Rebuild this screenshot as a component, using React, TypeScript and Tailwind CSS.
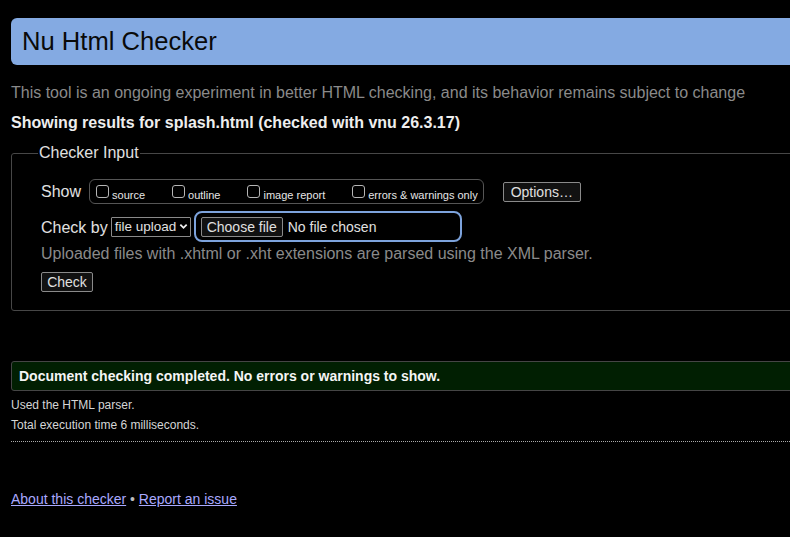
import React from "react";

function Box() {
  return <span className="inline-block w-[13px] h-[13px] border border-[#b5b5b5] rounded-[3px] bg-black shrink-0" />;
}

function Opt({ label, last }: { label: string; last?: boolean }) {
  return (
    <label className={`flex items-end ${last ? "" : "mr-[27px]"}`}>
      <Box />
      <span className="ml-[3px] text-[11px] leading-[11px] text-[#e6e6e6] translate-y-[3px]">{label}</span>
    </label>
  );
}

export default function App() {
  return (
    <div className="h-[537px] w-[790px] overflow-hidden bg-black text-[#dddddd] font-['Liberation_Sans',Arial,sans-serif]">
      <div className="w-[830px] pl-[11px] pt-[18px]">
        <header className="h-[47px] flex items-center pl-[11px] bg-[#84aae2] rounded-l-[6px]">
          <h1 className="text-[25.6px] leading-none text-[#0a0a0a]">Nu Html Checker</h1>
        </header>

        <p className="mt-[19px] text-[16px] leading-[18px] text-[#8a8a8a]">
          This tool is an ongoing experiment in better HTML checking, and its behavior remains subject to change
        </p>
        <p className="mt-[12px] text-[16px] leading-[18px] font-bold text-[#eeeeee]">
          Showing results for splash.html (checked with vnu 26.3.17)
        </p>

        <fieldset className="mt-[12px] border border-[#474747] rounded-[3px] pb-[16px]">
          <legend className="ml-[26px] px-[1px] text-[16px] leading-[18px] text-[#e0e0e0]">Checker Input</legend>
          <div className="pl-[29px] pt-[17px]">
            <div className="flex items-center h-[25px]">
              <span className="text-[16px] text-[#e0e0e0]">Show</span>
              <div className="ml-[8px] h-[25px] flex items-center border border-[#555] rounded-[6px] pl-[6px] pr-[5px]">
                <Opt label="source" />
                <Opt label="outline" />
                <Opt label="image report" />
                <Opt label="errors & warnings only" last />
              </div>
              <button className="ml-[19px] h-[20px] px-[7px] border border-[#8a8a8a] rounded-[2px] bg-[#111] text-[14px] leading-none text-[#e0e0e0]">
                Options…
              </button>
            </div>

            <div className="mt-[7px] flex items-center h-[31px]">
              <span className="text-[16px] text-[#e0e0e0] translate-y-[1px]">Check by</span>
              <div className="ml-[3px] w-[80px] h-[20px] flex items-center justify-between border border-[#8a8a8a] rounded-[1px] pl-[3px] pr-[2px] text-[13.5px] text-[#e0e0e0]">
                <span className="leading-none">file upload</span>
                <svg width="9" height="9" viewBox="0 0 10 10">
                  <path d="M1.5 3 L5 6.5 L8.5 3" fill="none" stroke="#f0f0f0" strokeWidth="2" />
                </svg>
              </div>
              <div className="ml-[3px] w-[268px] h-[31px] flex items-center border-2 border-[#7da3dc] rounded-[8px] pl-[5px]">
                <button className="w-[82px] h-[20px] border border-[#8a8a8a] rounded-[2px] bg-[#111] text-[14px] leading-none text-[#e0e0e0]">
                  Choose file
                </button>
                <span className="ml-[5px] text-[14px] text-[#e0e0e0] translate-y-[1px]">No file chosen</span>
              </div>
            </div>

            <p className="mt-[3px] text-[16px] leading-[18px] text-[#8a8a8a]">
              Uploaded files with .xhtml or .xht extensions are parsed using the XML parser.
            </p>

            <button className="mt-[9px] w-[52px] h-[20px] border border-[#8a8a8a] rounded-[2px] bg-[#111] text-[14px] leading-none text-[#e0e0e0]">
              Check
            </button>
          </div>
        </fieldset>

        <div className="mt-[50px] h-[30px] flex items-center pl-[7px] bg-[#011f02] border border-[#454545] rounded-l-[3px]">
          <span className="text-[14px] font-bold text-[#f5f5f5]">Document checking completed. No errors or warnings to show.</span>
        </div>

        <p className="mt-[7px] text-[12px] leading-[14px] text-[#d5d5d5]">Used the HTML parser.</p>
        <p className="mt-[6px] text-[12px] leading-[14px] text-[#d5d5d5]">Total execution time 6 milliseconds.</p>

        <div className="mt-[9px] border-t border-dotted border-[#aaaaaa]" />

        <p className="mt-[49px] text-[14px] leading-[16px]">
          <a className="underline text-[#a9a9ff]" href="#">About this checker</a>
          <span className="text-[#bbbbbb]"> • </span>
          <a className="underline text-[#a9a9ff]" href="#">Report an issue</a>
        </p>
      </div>
    </div>
  );
}
